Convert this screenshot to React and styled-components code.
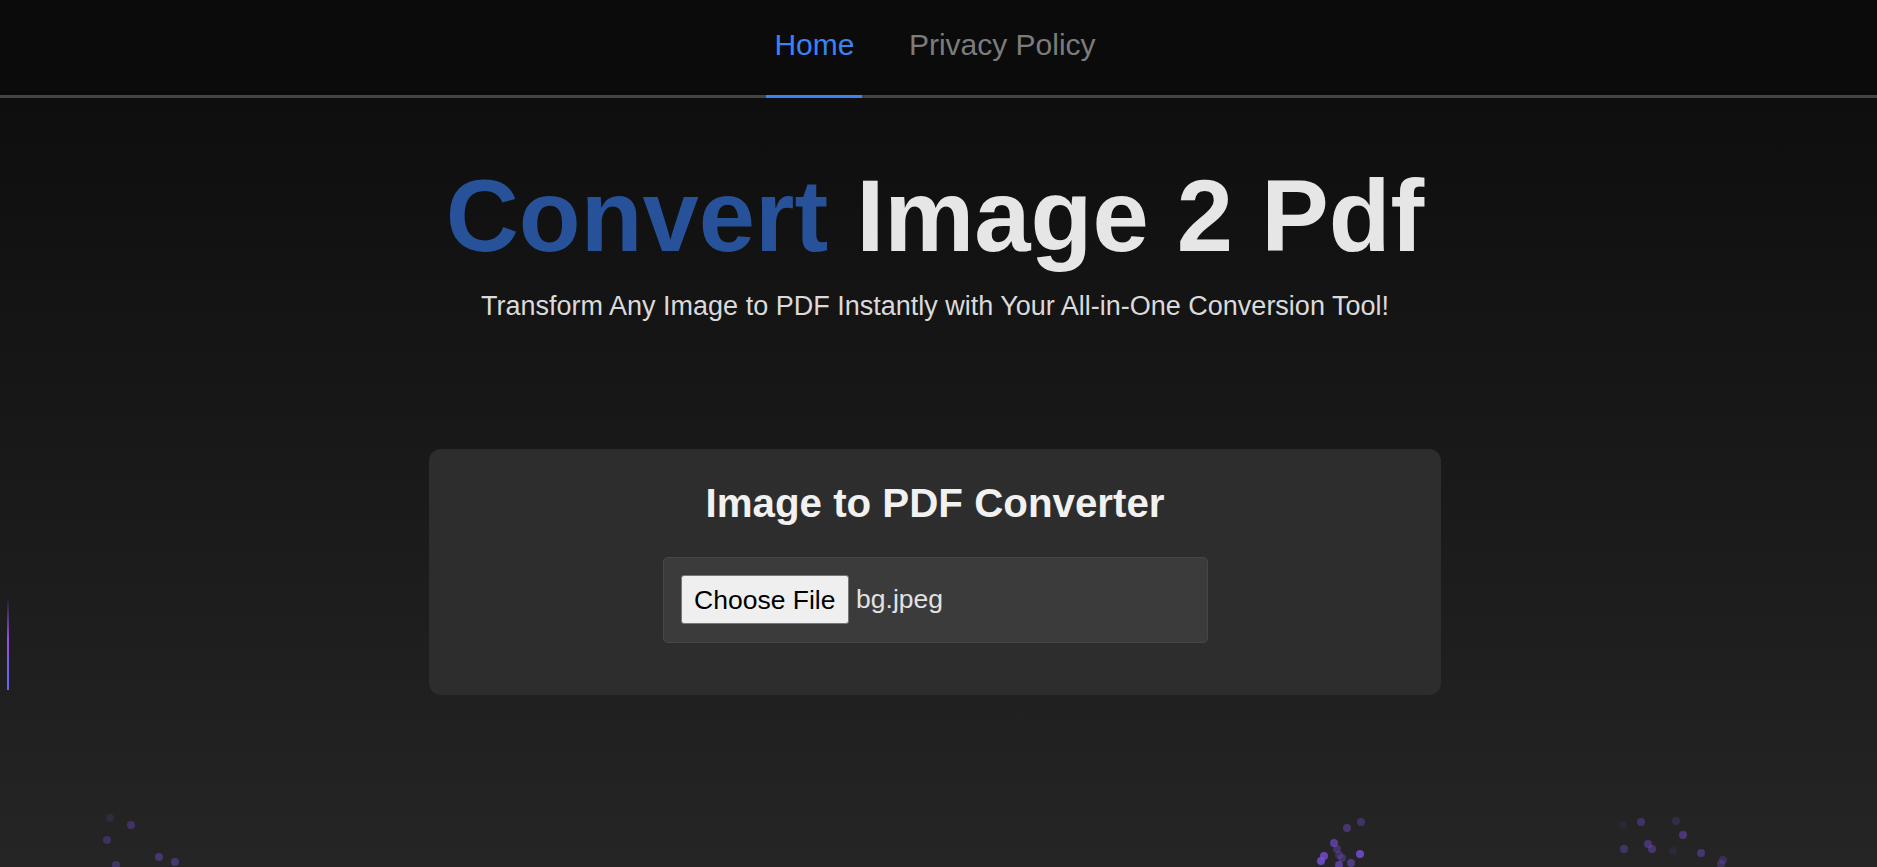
import styled, { createGlobalStyle } from "styled-components"

const GlobalStyle = createGlobalStyle`
  * { box-sizing: border-box; }
  html, body { margin: 0; padding: 0; }
  body {
    font-family: "Liberation Sans", Arial, sans-serif;
    background: #0d0d0d;
  }
`

const particles = [
  [110, 818, 0.15], [131, 825, 0.35], [107, 840, 0.3], [159, 857, 0.4], [175, 862, 0.4], [116, 865, 0.35],
  [1361, 822, 0.35], [1347, 828, 0.4], [1334, 843, 0.6], [1337, 849, 0.35], [1324, 856, 0.75],
  [1321, 861, 0.8], [1339, 855, 0.3], [1342, 858, 0.35], [1360, 854, 0.8], [1351, 863, 0.5], [1339, 865, 0.6],
  [1641, 822, 0.35], [1676, 821, 0.2], [1683, 835, 0.45], [1648, 844, 0.4], [1652, 849, 0.4],
  [1624, 849, 0.35], [1701, 853, 0.4], [1673, 851, 0.1], [1623, 825, 0.08], [1723, 860, 0.25], [1721, 864, 0.3],
]

const App = () => {
  return (
    <Page>
      <GlobalStyle />
      <Nav>
        <NavLink $active>Home</NavLink>
        <NavLink>Privacy Policy</NavLink>
      </Nav>
      <Main>
        <Title>
          <span>Convert</span> Image 2 Pdf
        </Title>
        <Subtitle>Transform Any Image to PDF Instantly with Your All-in-One Conversion Tool!</Subtitle>
        <Card>
          <CardTitle>Image to PDF Converter</CardTitle>
          <FileBox>
            <FileButton>Choose File</FileButton>
            <FileName>bg.jpeg</FileName>
          </FileBox>
        </Card>
      </Main>
      <Meteor />
      {particles.map(([x, y, a], i) => (
        <Dot key={i} style={{ left: x - 4, top: y - 4, opacity: a }} />
      ))}
    </Page>
  )
}

const Page = styled.div`
  position: relative;
  min-height: 100vh;
  height: 867px;
  overflow: hidden;
  background: linear-gradient(to bottom, #0b0b0b 0px, #0e0e0e 98px, #252525 100%);
`

const Nav = styled.nav`
  display: flex;
  justify-content: center;
  gap: 38.5px;
  height: 98px;
  padding-right: 7px;
  background: #0b0b0b;
  border-bottom: 3px solid #444;
`

const NavLink = styled.a`
  display: block;
  height: 98px;
  margin-bottom: -3px;
  padding: 28px 8px 0;
  font-size: 30px;
  line-height: 34px;
  color: ${(p) => (p.$active ? "#3b82f6" : "#7c7c7c")};
  border-bottom: 3px solid ${(p) => (p.$active ? "#3b82f6" : "transparent")};
  cursor: pointer;
  text-decoration: none;
`

const Main = styled.main`
  display: flex;
  flex-direction: column;
  align-items: center;
  padding: 60px 7px 0 0;
`

const Title = styled.h1`
  margin: 0;
  font-size: 101.2px;
  font-weight: 700;
  line-height: 116px;
  color: #e6e6e6;
  span {
    color: #27529a;
  }
`

const Subtitle = styled.p`
  margin: 17.4px 0 0;
  font-size: 27px;
  line-height: 30.6px;
  color: #dadada;
`

const Card = styled.section`
  display: flex;
  flex-direction: column;
  align-items: center;
  width: 1012px;
  margin-top: 127px;
  padding: 32px 0 52px;
  background: #2d2d2d;
  border-radius: 12px;
`

const CardTitle = styled.h2`
  margin: 0 0 30px;
  font-size: 40.3px;
  font-weight: 700;
  line-height: 46px;
  color: #f1f1f1;
`

const FileBox = styled.div`
  display: flex;
  align-items: center;
  gap: 7px;
  width: 545px;
  height: 86px;
  padding: 0 17px;
  background: #3b3b3b;
  border: 1px solid #474747;
  border-radius: 5px;
`

const FileButton = styled.button`
  height: 49px;
  padding: 0 12.6px;
  font-family: "Liberation Sans", Arial, sans-serif;
  font-size: 26.5px;
  line-height: 30px;
  color: #000;
  background: #efefef;
  border: 1px solid #767676;
  border-radius: 3px;
`

const FileName = styled.span`
  font-size: 26.5px;
  color: #e2e2e2;
`

const Meteor = styled.div`
  position: absolute;
  left: 7px;
  top: 597px;
  width: 2px;
  height: 93px;
  background: linear-gradient(to bottom, rgba(155, 77, 224, 0), #9b4de0 45%, #5b6cf5 100%);
`

const Dot = styled.span`
  position: absolute;
  width: 8px;
  height: 8px;
  border-radius: 50%;
  background: #7a50e0;
  filter: blur(0.6px);
`

export default App
